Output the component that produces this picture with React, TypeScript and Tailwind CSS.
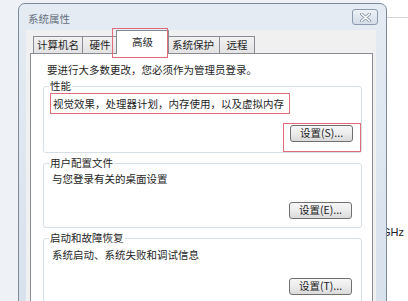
import React from 'react';

const cjk = "font-['Noto_Sans_CJK_SC',sans-serif]";

const SettingsButton = ({ hotkey }: { hotkey: string }) => (
  <button className="w-[63px] h-[17px] rounded-[3px] border border-[#707070] bg-linear-to-b from-[#f7f7f7] via-[#ececec] to-[#dadada] text-[10.5px] leading-none text-[#1a1a1a] flex items-center justify-center">
    设置({hotkey})...
  </button>
);

const GroupBox = ({ title, className, children }: { title: string; className?: string; children: React.ReactNode }) => (
  <div className={'relative border border-[#d5dfe5] rounded-[3px] ' + (className ?? '')}>
    <span className="absolute top-[-8px] left-[5px] bg-white px-[1px] text-[10.5px] leading-[14px]">{title}</span>
    {children}
  </div>
);

const tabs = [
  { label: '计算机名', w: 'w-[50px]' },
  { label: '硬件', w: 'w-[36px]' },
  { label: '高级', w: 'w-[53px]', active: true },
  { label: '系统保护', w: 'w-[54px]' },
  { label: '远程', w: 'w-[36px]' },
];

export default function App() {
  return (
    <div className={`relative w-[408px] h-[301px] overflow-hidden bg-[#eef2f7] ${cjk} text-[#1e1e1e]`}>
      {/* desktop behind: another window */}
      <div className="absolute left-[380px] top-0 w-[28px] h-[301px] bg-white">
        <div className="mt-[17px] h-px bg-[#d6d6d6]" />
        <span className="absolute left-[2px] top-[224px] text-[11px] font-['Liberation_Sans',sans-serif] text-[#222]">GHz</span>
      </div>

      {/* system properties window */}
      <div className="absolute left-[18px] top-[3px] w-[369px] h-[320px] rounded-t-[7px] border border-[#7d8a9a] bg-linear-to-b from-[#e4ebf3] to-[#d7e1ec] flex flex-col">
        <div className="h-[26px] flex items-start justify-between">
          <span className="ml-[9px] mt-[8px] text-[10.5px] leading-[14px] text-[#66707c]">系统属性</span>
          <div className="mr-[8px] mt-[5px] w-[26px] h-[16px] rounded-[3px] border border-[#8c9aae] bg-linear-to-b from-[#eef2f7] to-[#d3dce8] flex items-center justify-center">
            <svg width="11" height="9" viewBox="0 0 11 9">
              <path d="M1.5 1 L9.5 8 M9.5 1 L1.5 8" stroke="#8d98a6" strokeWidth="3" strokeLinecap="round" />
              <path d="M1.5 1 L9.5 8 M9.5 1 L1.5 8" stroke="#ffffff" strokeWidth="1.4" strokeLinecap="round" />
            </svg>
          </div>
        </div>

        <div className="ml-[7px] mr-[10px] flex-1 bg-[#f0f0f0] pl-[4px] pr-[3px] flex flex-col">
          {/* tab strip */}
          <div className="h-[23px] flex items-end pl-[3px] relative z-10">
            {tabs.map((t) =>
              t.active ? (
                <div
                  key={t.label}
                  className={`relative ${t.w} h-[24px] -mx-[2px] mb-[-1px] bg-white border border-[#898c95] border-b-0 flex items-center justify-center text-[10.5px] pb-[2px]`}
                >
                  {t.label}
                  <div className="absolute left-[-5px] top-[-3px] w-[56px] h-[30px] border border-[#e26b7c]" />
                </div>
              ) : (
                <div
                  key={t.label}
                  className={`${t.w} h-[17px] bg-linear-to-b from-[#f2f2f2] to-[#e3e3e3] border border-[#898c95] border-b-0 -ml-px first:ml-0 flex items-center justify-center text-[10.5px] leading-none`}
                >
                  {t.label}
                </div>
              )
            )}
          </div>

          {/* tab panel */}
          <div className="flex-1 bg-white border border-[#898c95] pl-[12px] pr-[10px] pt-[9px]">
            <p className="text-[10.5px] leading-[14px] pl-[4px]">要进行大多数更改，您必须作为管理员登录。</p>

            <GroupBox title="性能" className="mt-[9px] h-[67px] pl-[6px]">
              <div className="mt-[6px] w-[240px] h-[21px] border border-[#e26b7c] flex items-center pl-[2px] text-[10.5px]">
                视觉效果，处理器计划，内存使用，以及虚拟内存
              </div>
              <div className="flex justify-end">
                <div className="mt-[9px] w-[78px] h-[29px] border border-[#e26b7c] pl-[6px] pt-[1px]">
                  <SettingsButton hotkey="S" />
                </div>
              </div>
            </GroupBox>

            <GroupBox title="用户配置文件" className="mt-[10px] h-[65px] pl-[8px] pr-[9px]">
              <p className="mt-[8px] text-[10.5px] leading-[14px]">与您登录有关的桌面设置</p>
              <div className="mt-[16px] flex justify-end">
                <SettingsButton hotkey="E" />
              </div>
            </GroupBox>

            <GroupBox title="启动和故障恢复" className="mt-[10px] h-[70px] pl-[8px] pr-[9px]">
              <p className="mt-[9px] text-[10.5px] leading-[14px]">系统启动、系统失败和调试信息</p>
              <div className="mt-[16px] flex justify-end">
                <SettingsButton hotkey="T" />
              </div>
            </GroupBox>
          </div>
        </div>
      </div>
    </div>
  );
}
